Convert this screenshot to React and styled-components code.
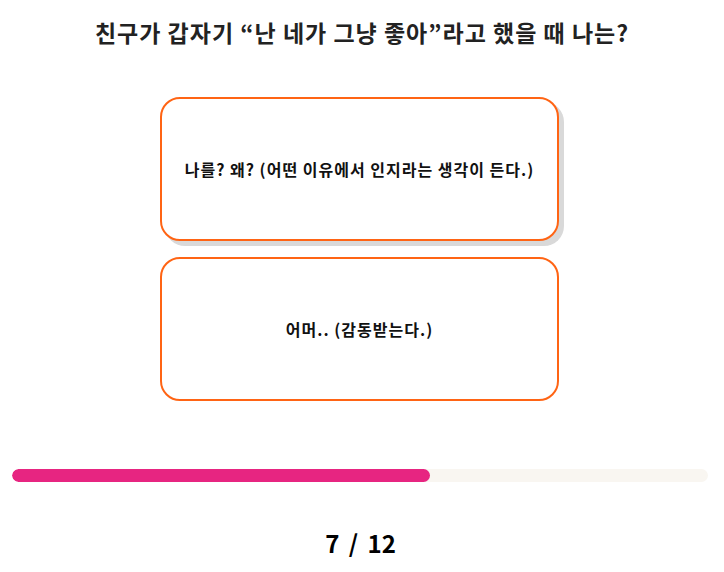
import styled, { createGlobalStyle } from 'styled-components';

const GlobalStyle = createGlobalStyle`
  * {
    box-sizing: border-box;
  }
  body {
    margin: 0;
    background: #ffffff;
    font-family: 'Noto Sans CJK KR', 'Noto Sans', sans-serif;
    color: #111;
  }
`;

const question = {
  title: '친구가 갑자기 “난 네가 그냥 좋아”라고 했을 때 나는?',
  answers: ['나를? 왜? (어떤 이유에서 인지라는 생각이 든다.)', '어머.. (감동받는다.)'],
};

const step = 7;
const total = 12;

const App = () => {
  return (
    <Page>
      <GlobalStyle />
      <Title>{question.title}</Title>
      <AnswerList>
        {question.answers.map((answer, i) => (
          <AnswerButton key={answer} $active={i === 0}>
            {answer}
          </AnswerButton>
        ))}
      </AnswerList>
      <ProgressTrack>
        <ProgressFill style={{ width: '60%' }} />
      </ProgressTrack>
      <Counter>
        {step} / {total}
      </Counter>
    </Page>
  );
};

export default App;

const Page = styled.div`
  width: 724px;
  height: 572px;
  display: flex;
  flex-direction: column;
  align-items: center;
  padding-top: 16px;
`;

const Title = styled.h1`
  margin: 0;
  font-size: 23px;
  font-weight: 700;
  line-height: 32px;
  letter-spacing: 1px;
  color: #222;
`;

const AnswerList = styled.div`
  margin-top: 49px;
  margin-right: 5px;
  display: flex;
  flex-direction: column;
  gap: 16px;
`;

const AnswerButton = styled.button`
  width: 399px;
  height: 144px;
  border: 2px solid #ff6414;
  border-radius: 20px;
  background: #fff;
  font-family: inherit;
  font-size: 16px;
  font-weight: 700;
  letter-spacing: 1px;
  color: #111;
  cursor: pointer;
  box-shadow: ${({ $active }) => ($active ? '5px 5px 0 #d9d9d9' : 'none')};
`;

const ProgressTrack = styled.div`
  margin-top: 68px;
  align-self: stretch;
  margin-left: 12px;
  margin-right: 16px;
  height: 13px;
  border-radius: 7px;
  background: #f9f6f1;
  overflow: hidden;
`;

const ProgressFill = styled.div`
  height: 100%;
  border-radius: 7px;
  background: #e72581;
`;

const Counter = styled.div`
  margin-top: 43px;
  margin-right: 3px;
  font-size: 24px;
  font-weight: 700;
  word-spacing: 4px;
  color: #000;
`;
